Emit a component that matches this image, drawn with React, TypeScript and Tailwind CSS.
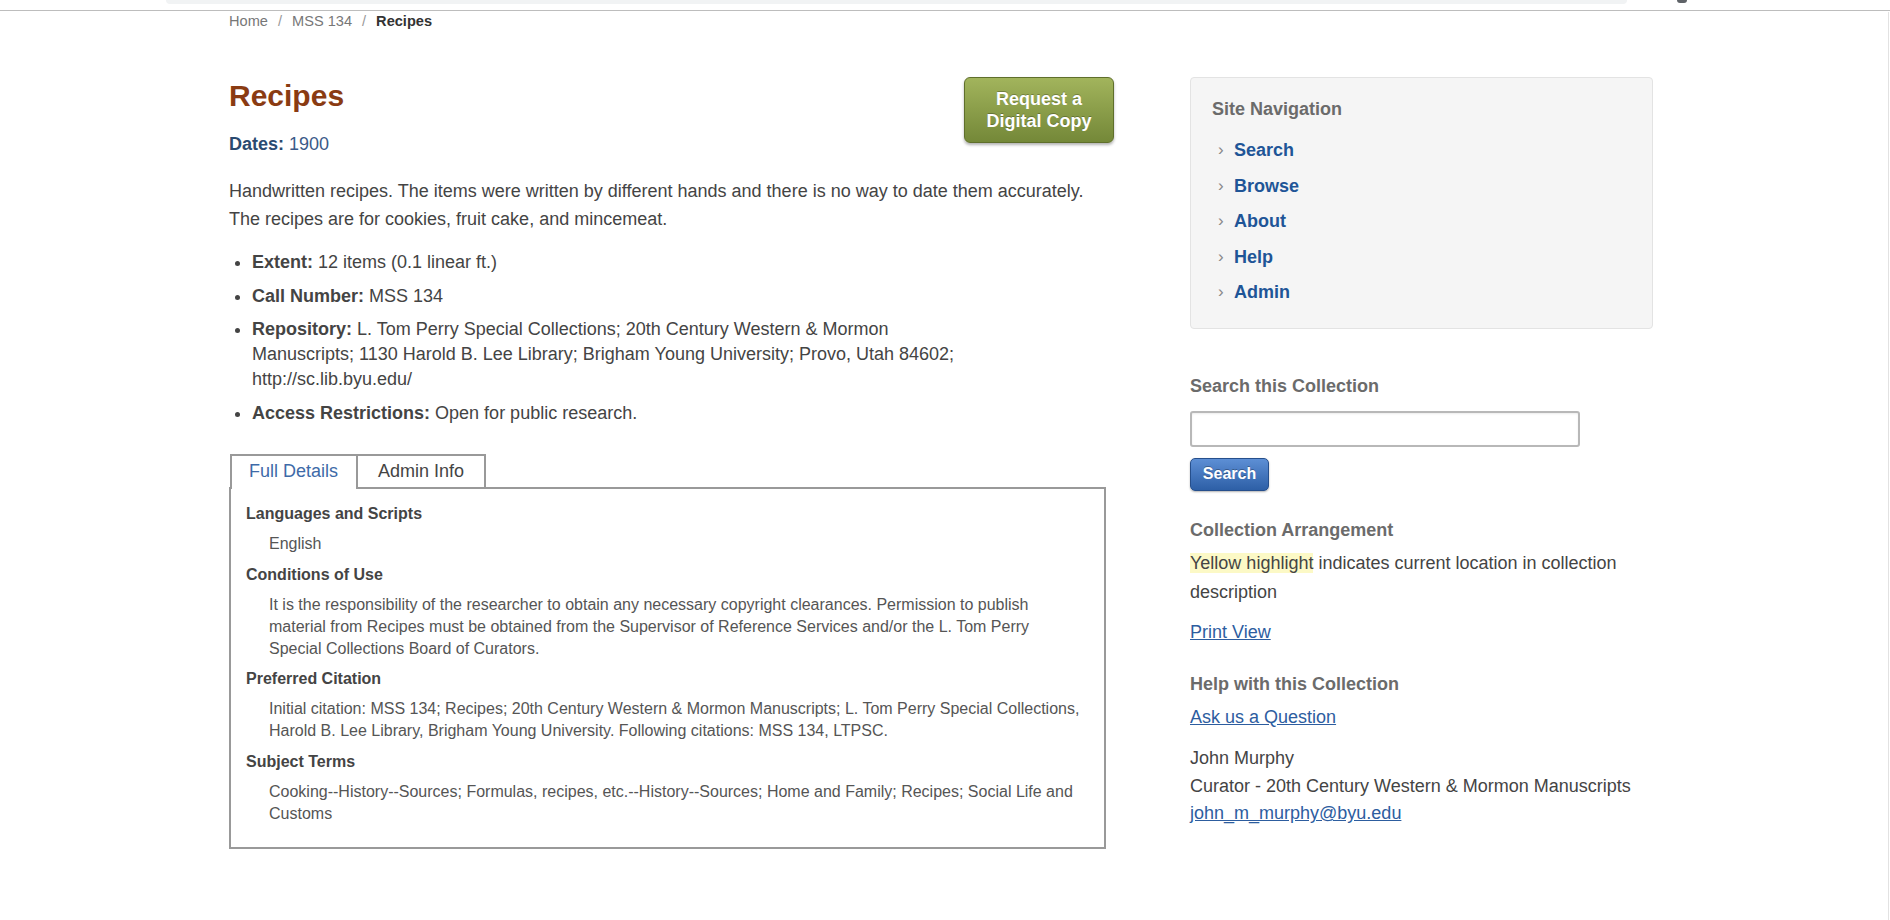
const dtl = [
  { title: 'Languages and Scripts', body: ['English'] },
  {
    title: 'Conditions of Use',
    body: [
      'It is the responsibility of the researcher to obtain any necessary copyright clearances. Permission to publish material from Recipes must be obtained from the Supervisor of Reference Services and/or the L. Tom Perry Special Collections Board of Curators.',
    ],
  },
  {
    title: 'Preferred Citation',
    body: [
      'Initial citation: MSS 134; Recipes; 20th Century Western & Mormon Manuscripts; L. Tom Perry Special Collections, Harold B. Lee Library, Brigham Young University. Following citations: MSS 134, LTPSC.',
    ],
  },
  {
    title: 'Subject Terms',
    body: [
      'Cooking--History--Sources; Formulas, recipes, etc.--History--Sources; Home and Family; Recipes; Social Life and Customs',
    ],
  },
]

const navLinks = ['Search', 'Browse', 'About', 'Help', 'Admin']

export default function App() {
  return (
    <div className="min-h-[920px] bg-white font-['Liberation_Sans',Arial,sans-serif] text-[#444]">
      {/* browser chrome remnant */}
      <div className="relative h-[11px] border-b border-[#bdbdbd]">
        <div className="absolute left-[166px] top-0 h-[4px] w-[1461px] rounded-b-[8px] bg-[#f1f3f4]" />
        <div className="absolute left-[1677px] top-0 h-[3px] w-[10px] rounded-b-[3px] bg-[#5f6368]" />
      </div>

      <div className="w-[1889px] min-h-[909px] border-r border-[#e2e2e2]">
        <div className="ml-[229px] w-[1424px]">
          {/* Breadcrumb */}
          <nav className="mt-[1px] flex h-[19px] items-center text-[14.6px] leading-[19px] text-[#777]">
            <span>Home</span>
            <span className="px-[10px] text-[#999]">/</span>
            <span>MSS 134</span>
            <span className="px-[10px] text-[#999]">/</span>
            <span className="font-bold text-[#333]">Recipes</span>
          </nav>

          <div className="mt-[46px] flex items-start">
            {/* Main column */}
            <div className="w-[885px] pt-[1px]">
              <div className="flex items-start justify-between">
                <div>
                  <h1 className="text-[30px] font-bold leading-[36px] text-[#8a3b12]">Recipes</h1>
                  <p className="mt-[18px] text-[18px] leading-[24px]">
                    <span className="font-bold text-[#2a4a70]">Dates:</span>{' '}
                    <span className="text-[#3b5a88]">1900</span>
                  </p>
                </div>
                <button className="-mt-[1px] h-[66px] w-[150px] rounded-[6px] border border-[#5f6f2b] bg-gradient-to-b from-[#a2b45c] to-[#748838] text-[18px] font-bold leading-[22px] text-white shadow-[0_2px_3px_rgba(0,0,0,0.3)] [text-shadow:0_-1px_0_rgba(0,0,0,0.25)]">
                  Request a<br />
                  Digital Copy
                </button>
              </div>

              <p className="mt-[21px] text-[18px] leading-[28px]">
                Handwritten recipes. The items were written by different hands and there is no way to date them
                accurately. The recipes are for cookies, fruit cake, and mincemeat.
              </p>

              <ul className="mt-[17px] flex w-[745px] list-disc flex-col gap-[8.5px] pl-[23px] text-[18px] leading-[25px] marker:text-[#444]">
                <li>
                  <b className="text-[#444]">Extent:</b> 12 items (0.1 linear ft.)
                </li>
                <li>
                  <b>Call Number:</b> MSS 134
                </li>
                <li>
                  <b>Repository:</b> L. Tom Perry Special Collections; 20th Century Western &amp; Mormon Manuscripts;
                  1130 Harold B. Lee Library; Brigham Young University; Provo, Utah 84602; http://sc.lib.byu.edu/
                </li>
                <li>
                  <b>Access Restrictions:</b> Open for public research.
                </li>
              </ul>

              {/* Tabs */}
              <div className="mt-[28px] w-[877px]">
                <div className="flex items-start pl-[1px]">
                  <div className="relative z-10 -mb-[2px] h-[35px] border-x-2 border-t-2 border-[#999] bg-white pr-[18px] pl-[17px] text-[18px] leading-[31px] text-[#3e6aa8]">
                    Full Details
                  </div>
                  <div className="h-[33px] border-t-2 border-r-2 border-[#999] bg-white px-[20px] text-[18px] leading-[31px] text-[#444]">
                    Admin Info
                  </div>
                </div>
                <div className="border-2 border-[#999] pt-[14.5px] pr-[20px] pb-[22px] pl-[15px] text-[16px] leading-[22px]">
                  <dl className="flex flex-col gap-[8.5px]">
                    {dtl.map((d) => (
                      <div key={d.title} className="flex flex-col gap-[8px]">
                        <dt className="font-bold text-[#444]">{d.title}</dt>
                        {d.body.map((b, i) => (
                          <dd key={i} className="pl-[23px] text-[#555]">
                            {b}
                          </dd>
                        ))}
                      </div>
                    ))}
                  </dl>
                </div>
              </div>
            </div>

            {/* Sidebar */}
            <aside className="ml-[76px] w-[463px] text-[18px]">
              <div className="h-[252px] rounded-[4px] border border-[#e3e3e3] bg-[#f5f5f5] pt-[18.5px] pl-[21px]">
                <h2 className="font-bold leading-[24px] text-[#6b6b6b]">Site Navigation</h2>
                <ul className="mt-[17.5px] flex flex-col gap-[11.5px] pl-[6px]">
                  {navLinks.map((l) => (
                    <li key={l} className="flex items-center leading-[24px]">
                      <span className="w-[16px] text-[17px] leading-[20px] text-[#888]">›</span>
                      <a className="font-bold text-[#1f5597]">{l}</a>
                    </li>
                  ))}
                </ul>
              </div>

              <h2 className="mt-[45px] font-bold leading-[24px] text-[#6b6b6b]">Search this Collection</h2>
              <input
                type="text"
                className="mt-[12.5px] block h-[36px] w-[390px] rounded-[3px] border-2 border-[#b8b8b8] bg-white shadow-[inset_0_1px_2px_rgba(0,0,0,0.08)] outline-none"
              />
              <button className="mt-[11px] h-[33px] w-[79px] rounded-[5px] border border-[#264f8c] bg-gradient-to-b from-[#5d8fd5] to-[#2d5fa6] text-[16px] font-bold leading-[20px] text-white shadow-[0_1px_2px_rgba(0,0,0,0.3)] [text-shadow:0_-1px_0_rgba(0,0,0,0.3)]">
                Search
              </button>

              <h2 className="mt-[27px] font-bold leading-[24px] text-[#6b6b6b]">Collection Arrangement</h2>
              <p className="mt-[7.5px] leading-[29px]">
                <span className="bg-[#fcf9c6]">Yellow highlight</span> indicates current location in collection
                description
              </p>
              <a className="mt-[13px] block leading-[24px] text-[#2d5d9f] underline">Print View</a>

              <h2 className="mt-[28px] font-bold leading-[24px] text-[#6b6b6b]">Help with this Collection</h2>
              <a className="mt-[9px] block leading-[24px] text-[#2d5d9f] underline">Ask us a Question</a>
              <div className="mt-[16px] leading-[27.7px]">
                <div>John Murphy</div>
                <div>Curator - 20th Century Western &amp; Mormon Manuscripts</div>
                <a className="text-[#2d5d9f] underline">john_m_murphy@byu.edu</a>
              </div>
            </aside>
          </div>
        </div>
      </div>
    </div>
  )
}
